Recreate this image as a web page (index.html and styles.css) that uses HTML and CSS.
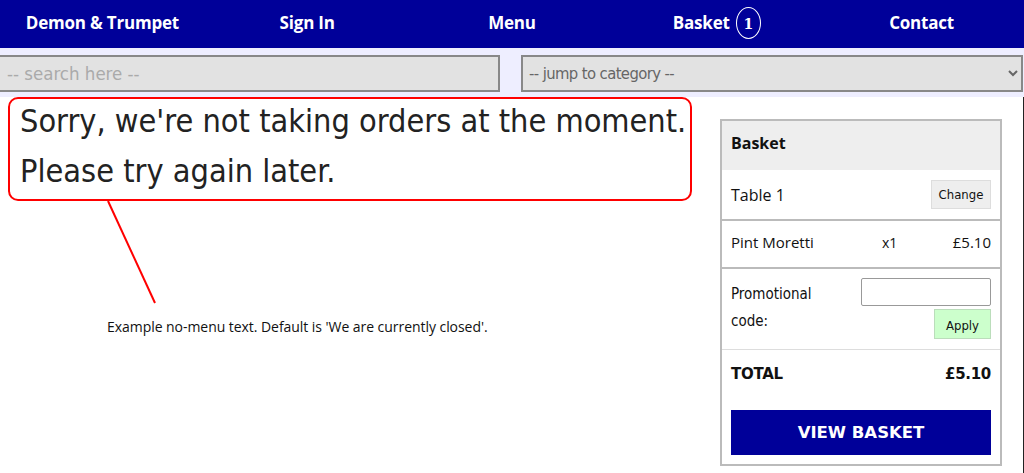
FILE: index.html
```html
<!DOCTYPE html>
<html lang="en">
<head>
    <meta charset="UTF-8">
    <meta name="viewport" content="width=device-width, initial-scale=1.0">
    <title>Demon &amp; Trumpet</title>
    <link rel="stylesheet" href="styles.css">
</head>
<body>
    <!-- Top navigation -->
    <nav class="topbar">
        <a class="nav-item" href="#">Demon &amp; Trumpet</a>
        <a class="nav-item" href="#">Sign In</a>
        <a class="nav-item" href="#">Menu</a>
        <a class="nav-item" href="#">Basket <span class="badge">1</span></a>
        <a class="nav-item" href="#">Contact</a>
    </nav>

    <div class="toolbar">
        <input class="search" type="text" placeholder="-- search here --">
        <select class="jump">
            <option>-- jump to category --</option>
        </select>
    </div>

    <div class="page">
        <div class="notice-col">
            <div class="closed-box">
                <p>Sorry, we're not taking orders at the moment.</p>
                <p>Please try again later.</p>
            </div>
            <svg class="pointer" width="60" height="110" viewBox="0 0 60 110">
                <line x1="2" y1="2" x2="49" y2="104" stroke="#ff0000" stroke-width="2"/>
            </svg>
            <p class="note">Example no-menu text. Default is 'We are currently closed'.</p>
        </div>

        <!-- Basket -->
        <aside class="basket">
            <div class="basket-head">Basket</div>
            <div class="basket-row table-row">
                <span class="table-name">Table 1</span>
                <button class="change-btn">Change</button>
            </div>
            <div class="basket-row item-row">
                <span class="item-name">Pint Moretti</span>
                <span class="item-qty">x1</span>
                <span class="item-price">£5.10</span>
            </div>
            <div class="basket-row promo-row">
                <span class="promo-label">Promotional code:</span>
                <div class="promo-form">
                    <input class="promo-input" type="text">
                    <button class="apply-btn">Apply</button>
                </div>
            </div>
            <div class="total-row">
                <span>TOTAL</span>
                <span>£5.10</span>
            </div>
            <button class="view-btn">VIEW BASKET</button>
        </aside>
    </div>
</body>
</html>
```

FILE: styles.css
```css
/* General */
* {
    margin: 0;
    padding: 0;
    box-sizing: border-box;
}

body {
    font-family: "DejaVu Sans", Verdana, sans-serif;
    background: #fff;
    width: 1024px;
    height: 473px;
    overflow: hidden;
}

/* Top bar */
.topbar {
    display: flex;
    height: 48px;
    background: #000099;
}

.nav-item {
    flex: 1;
    display: flex;
    justify-content: center;
    align-items: center;
    color: #fff;
    text-decoration: none;
    font-family: "Open Sans", sans-serif;
    font-weight: bold;
    font-size: 17px;
    letter-spacing: -0.2px;
    padding-bottom: 3px;
}

.badge {
    display: inline-flex;
    justify-content: center;
    align-items: center;
    width: 25px;
    height: 32px;
    margin-left: 6px;
    border: 1px solid #fff;
    border-radius: 50%;
    font-family: "DejaVu Serif", serif;
    font-size: 14px;
    padding-top: 2px;
}

/* Search / category bar */
.toolbar {
    display: flex;
    gap: 21px;
    height: 49px;
    padding: 7px 1px 0 0;
    background: #eeeeff;
}

.search,
.jump {
    height: 37px;
    border: 2px solid #888;
    background: #e2e2e2;
    font-family: "DejaVu Sans Condensed", sans-serif;
    color: #666;
    outline: none;
}

.search {
    width: 500px;
    border-left: none;
    padding-left: 7px;
    font-size: 18.5px;
}

.search::placeholder {
    color: #aaa;
}

.jump {
    flex: 1;
    padding-left: 2px;
    font-size: 16.5px;
    letter-spacing: -0.6px;
}

/* Page body */
.page {
    display: flex;
    height: 376px;
    border-right: 1px solid #222;
}

.notice-col {
    width: 720px;
    position: relative;
}

.closed-box {
    margin-left: 8px;
    width: 684px;
    height: 104px;
    border: 2px solid #ff0000;
    border-radius: 10px;
    padding: 0 0 0 10px;
    font-family: "DejaVu Sans Condensed", sans-serif;
    font-size: 32.2px;
    line-height: 50px;
    color: #222;
}

.closed-box p:first-child {
    margin-top: -3px;
}

.pointer {
    position: absolute;
    left: 106px;
    top: 102px;
}

.note {
    margin: 116px 0 0 107px;
    font-family: "Open Sans", sans-serif;
    font-size: 14px;
    letter-spacing: -0.05px;
    color: #111;
}

/* Basket */
.basket {
    width: 282px;
    height: 347px;
    margin-top: 22px;
    border: 2px solid #bbb;
    display: flex;
    flex-direction: column;
}

.basket-head {
    height: 49px;
    background: #eee;
    padding: 11px 0 0 9px;
    font-family: "Open Sans", sans-serif;
    font-weight: bold;
    font-size: 16px;
    color: #111;
}

.basket-row {
    display: flex;
    align-items: center;
    padding: 0 9px;
    border-bottom: 2px solid #bbb;
    font-family: "Open Sans", sans-serif;
    font-size: 15px;
    color: #111;
}

.table-row {
    height: 51px;
    justify-content: space-between;
    font-size: 16px;
}

.change-btn {
    width: 60px;
    height: 29px;
    background: #eee;
    border: 1px solid #ddd;
    font-family: "DejaVu Sans Condensed", sans-serif;
    font-size: 13px;
    color: #111;
}

.item-row {
    height: 48px;
    padding-bottom: 4px;
}

.item-name {
    width: 151px;
}

.item-qty {
    flex: 1;
    font-size: 14px;
}

.promo-row {
    height: 81px;
    align-items: flex-start;
    justify-content: space-between;
    border-bottom: 1px solid #ddd;
    padding-top: 12px;
}

.promo-label {
    width: 110px;
    font-family: "DejaVu Sans Condensed", sans-serif;
    font-size: 15px;
    line-height: 27px;
}

.promo-form {
    display: flex;
    flex-direction: column;
    align-items: flex-end;
    gap: 3px;
    margin-top: -3px;
}

.promo-input {
    width: 130px;
    height: 28px;
    border: 1px solid #999;
    border-radius: 2px;
}

.apply-btn {
    width: 57px;
    height: 30px;
    background: #ccffcc;
    border: 1px solid #bbddbb;
    font-family: "DejaVu Sans Condensed", sans-serif;
    font-size: 13px;
    color: #111;
    padding-top: 2px;
}

.total-row {
    display: flex;
    justify-content: space-between;
    padding: 15px 9px 0 9px;
    height: 60px;
    font-family: "DejaVu Sans", sans-serif;
    font-weight: bold;
    font-size: 15px;
    color: #111;
    letter-spacing: -0.3px;
}

.view-btn {
    margin: 0 9px;
    height: 45px;
    background: #000099;
    color: #fff;
    border: none;
    font-family: "DejaVu Sans", sans-serif;
    font-weight: bold;
    font-size: 16.5px;
}
```
